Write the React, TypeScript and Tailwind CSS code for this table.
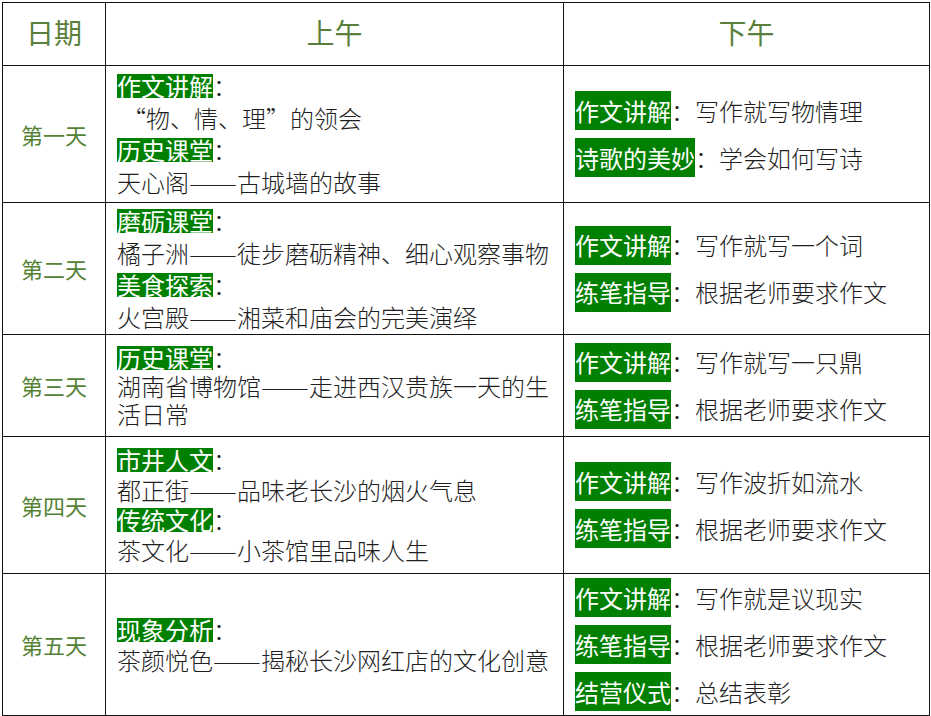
import React from "react";

type Seg = { tag?: string; text: string };

type Row = {
  day: string;
  height: string;
  lead: string;
  am: Seg[];
  pm: { tag: string; text: string }[];
};

const ROWS: Row[] = [
  {
    day: "第一天",
    height: "h-[137px]",
    lead: "leading-[32px]",
    am: [
      { tag: "作文讲解", text: "：" },
      { text: "“物、情、理”的领会" },
      { tag: "历史课堂", text: "：" },
      { text: "天心阁——古城墙的故事" },
    ],
    pm: [
      { tag: "作文讲解", text: "：写作就写物情理" },
      { tag: "诗歌的美妙", text: "：学会如何写诗" },
    ],
  },
  {
    day: "第二天",
    height: "h-[132px]",
    lead: "leading-[32px]",
    am: [
      { tag: "磨砺课堂", text: "：" },
      { text: "橘子洲——徒步磨砺精神、细心观察事物" },
      { tag: "美食探索", text: "：" },
      { text: "火宫殿——湘菜和庙会的完美演绎" },
    ],
    pm: [
      { tag: "作文讲解", text: "：写作就写一个词" },
      { tag: "练笔指导", text: "：根据老师要求作文" },
    ],
  },
  {
    day: "第三天",
    height: "h-[102px]",
    lead: "leading-[28px]",
    am: [
      { tag: "历史课堂", text: "：" },
      { text: "湖南省博物馆——走进西汉贵族一天的生" },
      { text: "活日常" },
    ],
    pm: [
      { tag: "作文讲解", text: "：写作就写一只鼎" },
      { tag: "练笔指导", text: "：根据老师要求作文" },
    ],
  },
  {
    day: "第四天",
    height: "h-[137px]",
    lead: "leading-[30px]",
    am: [
      { tag: "市井人文", text: "：" },
      { text: "都正街——品味老长沙的烟火气息" },
      { tag: "传统文化", text: "：" },
      { text: "茶文化——小茶馆里品味人生" },
    ],
    pm: [
      { tag: "作文讲解", text: "：写作波折如流水" },
      { tag: "练笔指导", text: "：根据老师要求作文" },
    ],
  },
  {
    day: "第五天",
    height: "h-[140px]",
    lead: "leading-[30px]",
    am: [
      { tag: "现象分析", text: "：" },
      { text: "茶颜悦色——揭秘长沙网红店的文化创意" },
    ],
    pm: [
      { tag: "作文讲解", text: "：写作就是议现实" },
      { tag: "练笔指导", text: "：根据老师要求作文" },
      { tag: "结营仪式", text: "：总结表彰" },
    ],
  },
];

const font = { fontFamily: '"Noto Sans CJK SC", "Noto Sans", sans-serif' };

// 破折号在 Noto 里偏窄，拉宽到两个字宽
function Body({ text }: { text: string }) {
  const parts = text.split("——");
  return (
    <>
      {parts.map((p, i) => (
        <React.Fragment key={i}>
          {i > 0 && (
            <span className="inline-block w-[48px]">
              <span className="inline-block origin-left scale-x-[1.2]">——</span>
            </span>
          )}
          {p}
        </React.Fragment>
      ))}
    </>
  );
}

export default function App() {
  return (
    <div className="bg-white w-[931px] h-[716px] pt-[2px] pl-[2px]" style={font}>
      <table className="table-fixed border-collapse w-[927px] text-[#1f1f1f]">
        <colgroup>
          <col className="w-[103px]" />
          <col className="w-[458px]" />
          <col className="w-[366px]" />
        </colgroup>
        <thead>
          <tr className="h-[63px]">
            {["日期", "上午", "下午"].map((h) => (
              <th
                key={h}
                className="border border-[#111] text-[28px] font-normal text-[#5a7f3c] text-center align-middle pb-[4px]"
              >
                {h}
              </th>
            ))}
          </tr>
        </thead>
        <tbody>
          {ROWS.map((r) => (
            <tr key={r.day} className={r.height}>
              <td className="border border-[#111] text-center align-middle text-[22px] text-[#548235]">
                {r.day}
              </td>
              <td className={`border border-[#111] align-middle pl-[11px] pr-[4px] text-[24px] font-light ${r.lead}`}>
                {r.am.map((s, i) => (
                  <div key={i} className="whitespace-nowrap">
                    {s.tag && (
                      <span className="inline-block bg-[#008000] text-white font-normal leading-[24px]">{s.tag}</span>
                    )}
                    <span className={s.text.startsWith("“") ? "pl-[5px]" : ""}>
                      <Body text={s.text} />
                    </span>
                  </div>
                ))}
              </td>
              <td className="border border-[#111] align-middle pl-[11px] text-[24px] font-light">
                {r.pm.map((s, i) => (
                  <div key={i} className="h-[47px] flex items-center whitespace-nowrap">
                    <span className="h-[39px] flex items-center bg-[#008000] text-white font-normal">{s.tag}</span>
                    <span>{s.text}</span>
                  </div>
                ))}
              </td>
            </tr>
          ))}
        </tbody>
      </table>
    </div>
  );
}
